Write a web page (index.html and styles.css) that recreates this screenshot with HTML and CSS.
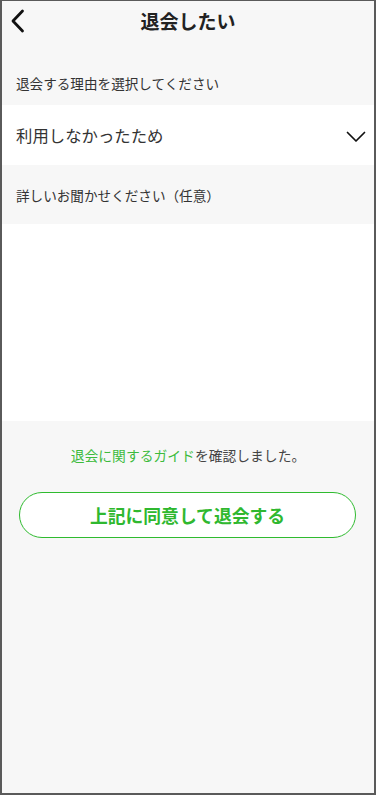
FILE: index.html
```html
<!DOCTYPE html>
<html lang="ja">
<head>
<meta charset="utf-8">
<title>退会したい</title>
<link rel="stylesheet" href="styles.css">
</head>
<body>
<div class="screen">
  <header class="header">
    <button class="back" aria-label="戻る">
      <svg width="16" height="24" viewBox="0 0 16 24"><path d="M12.5 2 L3 12 L12.5 22" fill="none" stroke="#111" stroke-width="2.8" stroke-linecap="round" stroke-linejoin="round"/></svg>
    </button>
    <h1 class="title">退会したい</h1>
    <span class="spacer"></span>
  </header>
  <div class="label label-reason">退会する理由を選択してください</div>
  <div class="select">
    <span class="select-text">利用しなかったため</span>
    <svg class="chev" width="20" height="12" viewBox="0 0 20 12"><path d="M1.5 1.5 L10 10 L18.5 1.5" fill="none" stroke="#111" stroke-width="1.7" stroke-linecap="round" stroke-linejoin="round"/></svg>
  </div>
  <div class="label label-detail">詳しいお聞かせください（任意）</div>
  <textarea class="detail"></textarea>
  <p class="confirm"><span class="link">退会に関するガイド</span>を確認しました。</p>
  <button class="agree">上記に同意して退会する</button>
</div>
</body>
</html>
```
FILE: styles.css
```css
* { box-sizing: border-box; }
html, body { margin: 0; padding: 0; }
body {
  font-family: "Noto Sans CJK JP", "Noto Sans", sans-serif;
  color: #333;
  background: #f7f7f7;
}
.screen {
  width: 376px;
  height: 795px;
  background: #f7f7f7;
  border-style: solid;
  border-color: #5a5a5a;
  border-width: 1px 2px 2px 2px;
  display: flex;
  flex-direction: column;
}
.header {
  height: 40px;
  display: grid;
  grid-template-columns: 40px 1fr 40px;
  align-items: center;
}
.back {
  background: none;
  border: none;
  padding: 0 0 0 8px;
  height: 40px;
  display: flex;
  align-items: center;
  cursor: pointer;
}
.title {
  margin: 0;
  text-align: center;
  font-size: 19px;
  font-weight: 700;
  color: #222;
  line-height: 24px;
}
.label {
  font-size: 13.6px;
  color: #333;
  line-height: 20px;
  padding: 0 14px;
}
.label-reason {
  padding-top: 32px;
  padding-bottom: 12px;
}
.select {
  height: 60px;
  background: #fff;
  display: flex;
  align-items: center;
  justify-content: space-between;
  padding: 0 8px 0 14px;
}
.select-text {
  font-size: 16.4px;
  color: #333;
  line-height: 22px;
}
.chev { margin-top: 4px; }
.label-detail {
  height: 59px;
  display: flex;
  align-items: center;
}
.detail {
  display: block;
  width: 100%;
  height: 197px;
  border: none;
  background: #fff;
  resize: none;
  outline: none;
  padding: 12px 14px;
  font-family: inherit;
}
.confirm {
  margin: 24px 0 0;
  text-align: center;
  font-size: 13.8px;
  line-height: 20px;
  color: #444;
}
.link { color: #3dbb3d; }
.agree {
  margin: 27px 18px 0 17px;
  height: 46px;
  border: 1.3px solid #2fbb2f;
  border-radius: 23px;
  background: #fff;
  color: #2fb82f;
  font-family: inherit;
  font-size: 17.8px;
  font-weight: 700;
  cursor: pointer;
}
```
